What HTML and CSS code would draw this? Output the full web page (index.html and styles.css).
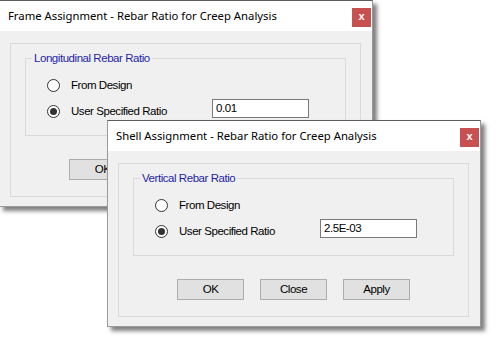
FILE: index.html
```html
<!DOCTYPE html>
<html>
<head>
<meta charset="utf-8">
<link rel="stylesheet" href="styles.css">
</head>
<body>
<div class="desktop">
  <section class="dialog dialog-frame">
    <header class="titlebar">
      <span class="title">Frame Assignment - Rebar Ratio for Creep Analysis</span>
      <span class="close">x</span>
    </header>
    <div class="client">
      <div class="panel">
        <div class="group">
          <span class="legend">Longitudinal Rebar Ratio</span>
          <div class="row"><span class="radio"></span><span class="label">From Design</span></div>
          <div class="row"><span class="radio checked"></span><span class="label">User Specified Ratio</span><span class="field">0.01</span></div>
        </div>
        <div class="buttons"><span class="btn">OK</span><span class="btn">Close</span><span class="btn">Apply</span></div>
      </div>
    </div>
  </section>
  <section class="dialog dialog-shell">
    <header class="titlebar">
      <span class="title">Shell Assignment - Rebar Ratio for Creep Analysis</span>
      <span class="close">x</span>
    </header>
    <div class="client">
      <div class="panel">
        <div class="group">
          <span class="legend">Vertical Rebar Ratio</span>
          <div class="row"><span class="radio"></span><span class="label">From Design</span></div>
          <div class="row"><span class="radio checked"></span><span class="label">User Specified Ratio</span><span class="field">2.5E-03</span></div>
        </div>
        <div class="buttons"><span class="btn">OK</span><span class="btn">Close</span><span class="btn">Apply</span></div>
      </div>
    </div>
  </section>
</div>
</body>
</html>
```

FILE: styles.css
```css
html, body {
  margin: 0;
  padding: 0;
  background: #ffffff;
}
.desktop {
  position: relative;
  width: 497px;
  height: 342px;
  overflow: hidden;
  background: #ffffff;
}
.dialog {
  position: absolute;
  width: 374px;
  height: 207px;
  box-sizing: border-box;
  background: #f0f0f0;
  border: 1px solid #9a9a9a;
  border-top-color: #5c5c5c;
  box-shadow: 4px 4px 4px rgba(0, 0, 0, 0.5);
  display: flex;
  flex-direction: column;
  font-family: "Liberation Sans", Arial, sans-serif;
  font-size: 11.5px;
  letter-spacing: -0.45px;
  color: #000;
}
.dialog-frame {
  left: -1px;
  top: 0;
}
.dialog-shell {
  left: 107px;
  top: 120px;
}
.titlebar {
  height: 30px;
  flex: none;
  background: #ffffff;
  display: flex;
  align-items: flex-start;
  padding-left: 8px;
}
.title {
  font-family: "Noto Sans", "Open Sans", sans-serif;
  font-size: 11.3px;
  letter-spacing: 0;
  line-height: 30px;
  color: #000;
  white-space: nowrap;
}
.close {
  margin: 7px 1px 0 auto;
  width: 19px;
  height: 19px;
  background: #c75050;
  color: #ffffff;
  font-family: "Liberation Sans", Arial, sans-serif;
  font-weight: bold;
  font-size: 11px;
  letter-spacing: 0;
  line-height: 17px;
  text-align: center;
}
.client {
  padding: 12px 11px 0 10px;
}
.panel {
  height: 154px;
  box-sizing: border-box;
  border: 1px solid #dadada;
  padding: 14px 14px 0 14px;
}
.group {
  position: relative;
  height: 78px;
  box-sizing: border-box;
  border: 1px solid #dadada;
  padding: 13px 36px 0 21px;
}
.legend {
  position: absolute;
  top: -8px;
  left: 6px;
  padding: 0 2px;
  background: #f0f0f0;
  color: #1f1fa8;
  line-height: 15px;
  white-space: nowrap;
}
.row {
  height: 26px;
  display: flex;
  align-items: center;
}
.radio {
  width: 13px;
  height: 13px;
  box-sizing: border-box;
  border: 1px solid #333333;
  border-radius: 50%;
  background: #ffffff;
  display: flex;
  align-items: center;
  justify-content: center;
  flex: none;
}
.radio.checked::after {
  content: "";
  width: 7px;
  height: 7px;
  border-radius: 50%;
  background: #333333;
}
.label {
  margin-left: 11px;
  white-space: nowrap;
}
.field {
  margin-left: auto;
  margin-bottom: 5px;
  width: 97px;
  height: 19px;
  box-sizing: border-box;
  border: 1px solid #7a7a7a;
  background: #ffffff;
  padding-left: 3px;
  line-height: 17px;
}
.buttons {
  margin-top: 23px;
  display: flex;
  justify-content: center;
  gap: 16px;
}
.btn {
  width: 67px;
  height: 21px;
  box-sizing: border-box;
  border: 1px solid #adadad;
  background: #e1e1e1;
  text-align: center;
  line-height: 19px;
}
```
